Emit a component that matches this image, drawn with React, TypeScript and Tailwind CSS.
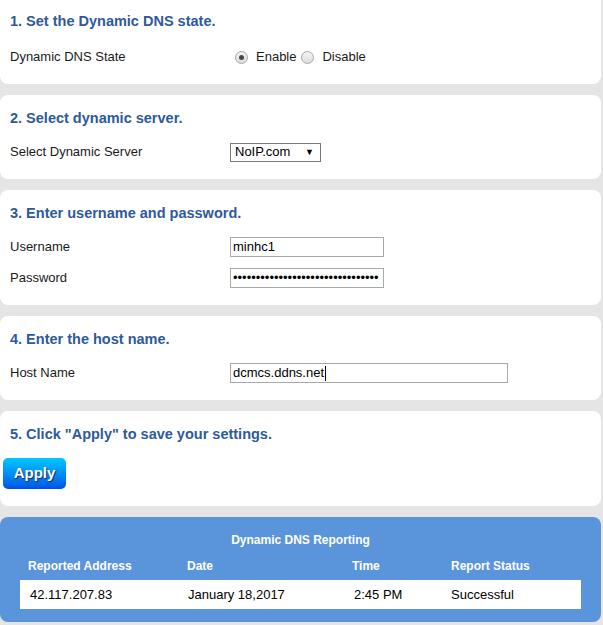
import type { ReactNode } from "react";

const font = { fontFamily: '"Liberation Sans", Arial, sans-serif' };

function Card({
  title,
  children,
  first = false,
}: {
  title: string;
  children: ReactNode;
  first?: boolean;
}) {
  return (
    <section
      className={
        first
          ? "rounded-b-[8px] bg-white pb-[16px] pl-[10px] pr-[10px] pt-[12px]"
          : "rounded-[8px] bg-white pb-[16px] pl-[10px] pr-[10px] pt-[14px]"
      }
    >
      <h2 className="text-[14.5px] font-bold leading-[18px] text-[#2d5a9b]">
        {title}
      </h2>
      <div className={first ? "mt-[16px]" : "mt-[14px]"}>{children}</div>
    </section>
  );
}

function Row({ label, children }: { label: string; children: ReactNode }) {
  return (
    <div className="flex h-[22px] items-center">
      <div className="w-[220px] text-[13px] text-[#1a1a1a]">{label}</div>
      <div className="flex items-center">{children}</div>
    </div>
  );
}

function Radio({ checked }: { checked?: boolean }) {
  return (
    <span className="flex h-[13px] w-[13px] items-center justify-center rounded-full border border-[#a6a6a6] bg-gradient-to-b from-[#f4f4f4] to-[#dcdcdc]">
      {checked ? (
        <span className="h-[5px] w-[5px] rounded-full bg-[#4a4a4a]" />
      ) : null}
    </span>
  );
}

function TextBox({ value, width, caret = false }: { value: string; width: string; caret?: boolean }) {
  return (
    <div
      className={`flex h-[20px] ${width} items-center border border-[#a9a9a9] bg-white pl-[2px] text-[13px] text-black`}
    >
      <span>{value}</span>
      {caret ? <span className="ml-[1px] h-[15px] w-[1px] bg-black" /> : null}
    </div>
  );
}

export default function App() {
  return (
    <div className="min-h-screen w-[603px] bg-[#e5e5e5] pr-[2px]" style={font}>
      <div className="flex flex-col gap-[11px]">
        <Card title="1. Set the Dynamic DNS state." first>
          <Row label="Dynamic DNS State">
            <div className="ml-[5px] flex items-center text-[13px] text-[#1a1a1a]">
              <Radio checked />
              <span className="ml-[8px]">Enable</span>
              <span className="ml-[5px]">
                <Radio />
              </span>
              <span className="ml-[8px]">Disable</span>
            </div>
          </Row>
        </Card>

        <Card title="2. Select dynamic server.">
          <Row label="Select Dynamic Server">
            <div className="flex h-[19px] w-[91px] items-center justify-between border border-[#7a7a7a] bg-white pl-[4px] pr-[6px] text-[13px] text-black">
              <span>NoIP.com</span>
              <span className="text-[9px] leading-none">▼</span>
            </div>
          </Row>
        </Card>

        <Card title="3. Enter username and password.">
          <div className="flex flex-col gap-[9px]">
            <Row label="Username">
              <TextBox value="minhc1" width="w-[154px]" />
            </Row>
            <Row label="Password">
              <TextBox
                value={"\u2022".repeat(32)}
                width="w-[154px] overflow-hidden whitespace-nowrap"
              />
            </Row>
          </div>
        </Card>

        <Card title="4. Enter the host name.">
          <Row label="Host Name">
            <TextBox value="dcmcs.ddns.net" width="w-[278px]" caret />
          </Row>
        </Card>

        <section className="rounded-[8px] bg-white pb-[17px] pl-[10px] pr-[10px] pt-[14px]">
          <h2 className="text-[14.5px] font-bold leading-[18px] text-[#2d5a9b]">
            5. Click "Apply" to save your settings.
          </h2>
          <button
            type="button"
            className="-ml-[7px] mt-[15px] h-[31px] w-[63px] rounded-[5px] bg-gradient-to-b from-[#00c8ff] to-[#0050e6] text-[15px] font-bold text-white [text-shadow:1px_1px_1px_#1a2a5a]"
          >
            Apply
          </button>
        </section>

        <section className="rounded-[8px] bg-[#5a95dc] px-[20px] pb-[13px] pt-[16px] text-white">
          <div className="text-center text-[12px] font-bold leading-[14px]">
            Dynamic DNS Reporting
          </div>
          <div className="mt-[12px] grid grid-cols-[159px_165px_99px_1fr] pl-[8px] text-[12px] font-bold leading-[14px]">
            <span>Reported Address</span>
            <span>Date</span>
            <span>Time</span>
            <span>Report Status</span>
          </div>
          <div className="mt-[7px] grid h-[29px] grid-cols-[158px_166px_97px_1fr] items-center bg-white pl-[10px] text-[13px] text-black">
            <span>42.117.207.83</span>
            <span>January 18,2017</span>
            <span>2:45 PM</span>
            <span>Successful</span>
          </div>
        </section>
      </div>
    </div>
  );
}
